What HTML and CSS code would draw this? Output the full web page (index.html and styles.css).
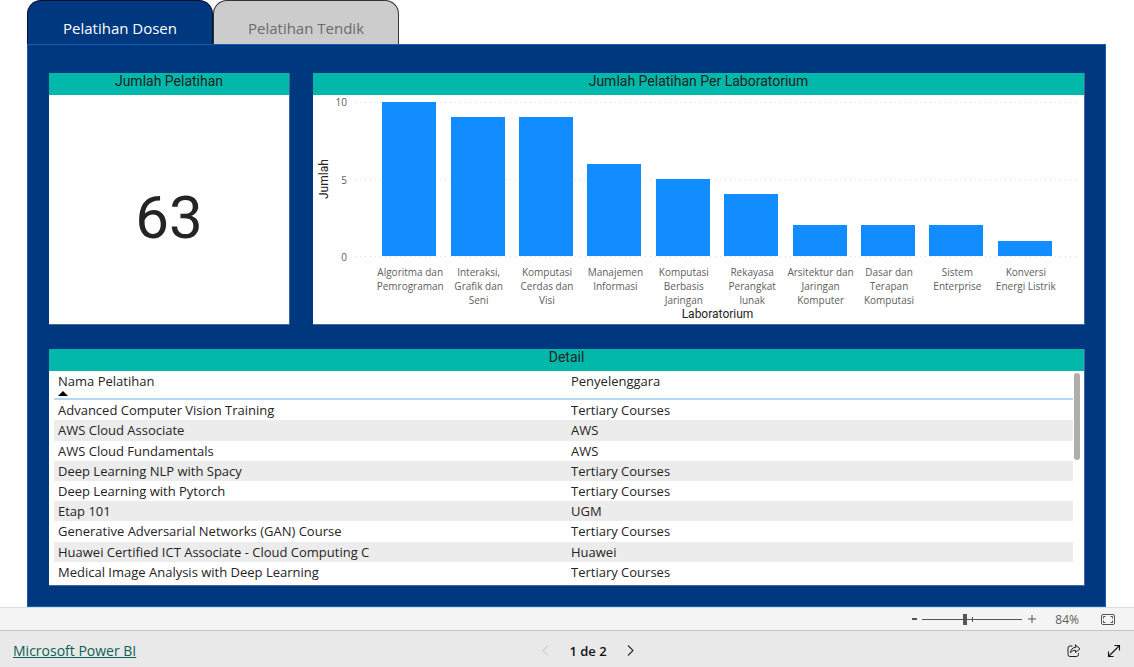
FILE: index.html
```html
<!DOCTYPE html>
<html lang="id">
<head>
<meta charset="utf-8">
<meta name="viewport" content="width=device-width, initial-scale=1">
<title>Pelatihan Dosen</title>
<link rel="stylesheet" href="styles.css">
</head>
<body>
<main class="report">
  <div class="tabs" role="tablist">
    <button class="tab tab-active" type="button" role="tab" aria-selected="true">Pelatihan Dosen</button>
    <button class="tab" type="button" role="tab" aria-selected="false">Pelatihan Tendik</button>
  </div>
  <div class="canvas">
    <section class="card total">
      <h2 class="card-title">Jumlah Pelatihan</h2>
      <p class="total-value">63</p>
    </section>

    <section class="card">
      <h2 class="card-title">Jumlah Pelatihan Per Laboratorium</h2>
      <div class="chart">
        <div class="axis-name-y">Jumlah</div>
        <div class="axis-y"><span>10</span><span>5</span><span>0</span></div>
        <div class="plot">
          <div class="gridlines"><i></i><i></i><i></i></div>
          <div class="bars">
            <div class="bar" style="height:100%"></div>
            <div class="bar" style="height:90%"></div>
            <div class="bar" style="height:90%"></div>
            <div class="bar" style="height:60%"></div>
            <div class="bar" style="height:50%"></div>
            <div class="bar" style="height:40%"></div>
            <div class="bar" style="height:20%"></div>
            <div class="bar" style="height:20%"></div>
            <div class="bar" style="height:20%"></div>
            <div class="bar" style="height:10%"></div>
          </div>
        </div>
        <div class="axis-x">
          <span>Algoritma dan<br>Pemrograman</span>
          <span>Interaksi,<br>Grafik dan<br>Seni</span>
          <span>Komputasi<br>Cerdas dan<br>Visi</span>
          <span>Manajemen<br>Informasi</span>
          <span>Komputasi<br>Berbasis<br>Jaringan</span>
          <span>Rekayasa<br>Perangkat<br>lunak</span>
          <span>Arsitektur dan<br>Jaringan<br>Komputer</span>
          <span>Dasar dan<br>Terapan<br>Komputasi</span>
          <span>Sistem<br>Enterprise</span>
          <span>Konversi<br>Energi Listrik</span>
        </div>
        <div class="axis-name-x">Laboratorium</div>
      </div>
    </section>

    <section class="card detail">
      <h2 class="card-title">Detail</h2>
      <div class="detail-body">
        <table class="table">
          <thead>
            <tr>
              <th aria-sort="ascending">Nama Pelatihan<svg class="sort" viewBox="0 0 10 5" aria-hidden="true"><path d="M0 5 5 0l5 5z"/></svg></th>
              <th>Penyelenggara</th>
            </tr>
          </thead>
          <tbody>
            <tr><td>Advanced Computer Vision Training</td><td>Tertiary Courses</td></tr>
            <tr><td>AWS Cloud Associate</td><td>AWS</td></tr>
            <tr><td>AWS Cloud Fundamentals</td><td>AWS</td></tr>
            <tr><td>Deep Learning NLP with Spacy</td><td>Tertiary Courses</td></tr>
            <tr><td>Deep Learning with Pytorch</td><td>Tertiary Courses</td></tr>
            <tr><td>Etap 101</td><td>UGM</td></tr>
            <tr><td>Generative Adversarial Networks (GAN) Course</td><td>Tertiary Courses</td></tr>
            <tr><td>Huawei Certified ICT Associate - Cloud Computing C</td><td>Huawei</td></tr>
            <tr><td>Medical Image Analysis with Deep Learning</td><td>Tertiary Courses</td></tr>
          </tbody>
        </table>
        <div class="scrollbar"><div class="scroll-thumb"></div></div>
      </div>
    </section>
  </div>
</main>

<div class="zoombar">
  <button class="icon-btn zoom-out" type="button" aria-label="Zoom out">
    <svg width="5" height="2" viewBox="0 0 5 2"><path d="M0 0h5v2H0z" fill="#555"/></svg>
  </button>
  <input class="zoom-range" type="range" min="0" max="100" value="42" aria-label="Zoom">
  <button class="icon-btn zoom-in" type="button" aria-label="Zoom in">
    <svg width="8" height="8" viewBox="0 0 8 8"><path d="M0 4h8M4 0v8" stroke="#555" fill="none"/></svg>
  </button>
  <span class="zoom-value">84%</span>
  <button class="icon-btn" type="button" aria-label="Fit to page">
    <svg width="14" height="11" viewBox="0 0 14 11" fill="none" stroke="#555"><rect x=".5" y=".5" width="13" height="10" rx="1.5"/><path d="M2.500 4.500v-2h2M2.500 6.500v2h2M11.500 4.500v-2h-2M11.500 6.500v2h-2"/></svg>
  </button>
</div>

<footer class="footer">
  <a class="brand" href="#">Microsoft Power BI</a>
  <nav class="pager" aria-label="Pages">
    <button class="icon-btn" type="button" disabled aria-label="Previous page">
      <svg width="7" height="11" viewBox="0 0 7 11" fill="none" stroke="#bdbdbd"><path d="M6 .5 1 5.500l5 5"/></svg>
    </button>
    <span>1 de 2</span>
    <button class="icon-btn" type="button" aria-label="Next page">
      <svg width="7" height="11" viewBox="0 0 7 11" fill="none" stroke="#333" stroke-width="1.200"><path d="M1 .5l5 5-5 5"/></svg>
    </button>
  </nav>
  <div class="actions">
    <button class="icon-btn" type="button" aria-label="Share">
      <svg width="14" height="14" viewBox="0 0 14 14" fill="none" stroke="#222" stroke-linejoin="round" stroke-linecap="round"><path d="M5 2H3a2 2 0 0 0-2 2v6.500a2 2 0 0 0 2 2h6.500a2 2 0 0 0 2-2V9.500"/><path d="M8.500 1 13 4.800 8.500 8.500V6.300C6.300 6.200 4.800 7 3.500 8.800c.2-3.300 2-5.300 5-5.500z"/></svg>
    </button>
    <button class="icon-btn" type="button" aria-label="Full screen">
      <svg width="14" height="14" viewBox="0 0 14 14" fill="none" stroke="#111" stroke-width="1.100"><path d="M1.500 12.500l11-11M7.500 1.500h5v5M1.500 7.500v5h5"/></svg>
    </button>
  </div>
</footer>
</body>
</html>
```
FILE: styles.css
```css
* {
  box-sizing: border-box;
}

body {
  margin: 0;
  min-height: 100vh;
  display: flex;
  flex-direction: column;
  background: #fff;
  color: #252423;
  font-family: "Open Sans", "Noto Sans", sans-serif;
  font-size: 13px;
}

button {
  font-family: inherit;
}

.report {
  padding: 0 28px 0 27px;
}

/* Page tabs */
.tabs {
  display: flex;
}

.tab {
  width: 186px;
  height: 44px;
  padding: 10px 0 0;
  border: 1px solid #333;
  border-bottom: 0;
  border-radius: 14px 14px 0 0;
  background: #ccc;
  color: #6b6b6b;
  font-size: 15px;
  line-height: 20px;
}

.tab-active {
  border-color: #001233;
  background: #003880;
  color: #fff;
}

/* Dashboard canvas */
.canvas {
  display: grid;
  grid-template-columns: 241fr 772fr;
  gap: 24px 23px;
  padding: 28px 20px 20px 21px;
  border: 1px solid #0d62b8;
  background: #003880;
}

.card {
  display: flex;
  flex-direction: column;
  background: #fff;
  border: 1px solid #41699f;
  border-width: 0 1px 1px 0;
}

.card-title {
  margin: 0;
  height: 22px;
  background: #01b8aa;
  font-family: Roboto, sans-serif;
  font-size: 14px;
  font-weight: 400;
  line-height: 17px;
  text-align: center;
}

.total-value {
  flex: 1;
  display: flex;
  align-items: center;
  justify-content: center;
  margin: 0;
  padding-top: 16px;
  font-family: Roboto, sans-serif;
  font-size: 60px;
  font-weight: 400;
}

/* Column chart */
.chart {
  display: grid;
  grid-template-columns: 20px 14px 1fr;
  grid-template-rows: 169px 43px 14px;
  padding: 0 4px 3px 0;
  font-size: 10px;
  line-height: 14px;
}

.axis-name-y,
.axis-name-x {
  font-family: Roboto, sans-serif;
  font-size: 12px;
  text-align: center;
}

.axis-name-y {
  writing-mode: vertical-rl;
  transform: rotate(180deg);
  line-height: 22px;
}

.axis-y {
  display: flex;
  flex-direction: column;
  justify-content: space-between;
  color: #605e5c;
  text-align: right;
}

.plot {
  display: grid;
  margin-left: 8px;
  padding: 7px 0;
}

.gridlines,
.bars {
  grid-area: 1 / 1;
}

.gridlines {
  display: flex;
  flex-direction: column;
  justify-content: space-between;
}

.gridlines i {
  height: 1px;
  background: repeating-linear-gradient(90deg, #dcdcdc 0 1px, transparent 1px 5px);
}

.bars,
.axis-x {
  display: grid;
  grid-template-columns: repeat(10, 1fr);
}

.bars {
  align-items: end;
  justify-items: center;
  padding: 0 21px 1px 20px;
}

.bar {
  width: 79%;
  background: #118dff;
}

.axis-x {
  grid-column: 3;
  padding: 1px 20px 0 29px;
  color: #605e5c;
  text-align: center;
  white-space: nowrap;
}

.axis-x span {
  display: flex;
  justify-content: center;
}

.axis-name-x {
  grid-column: 3;
  margin-left: 8px;
}

/* Detail table */
.detail {
  grid-column: 1 / -1;
}

.detail-body {
  display: flex;
  justify-content: space-between;
  height: 214px;
  padding: 0 4px 0 5px;
}

.table {
  flex: 1;
  height: 211px;
  border-collapse: collapse;
  table-layout: fixed;
}

.table th {
  height: 28px;
  padding: 2px 4px 0;
  border-bottom: 2px solid #b3d9f9;
  font-weight: 400;
  line-height: 16px;
  text-align: left;
  vertical-align: top;
}

.table th:first-child {
  width: 513px;
}

.table td {
  padding: 0 4px;
  line-height: 18px;
}

.table tbody tr:nth-child(even) {
  background: #ececec;
}

.sort {
  display: block;
  width: 10px;
  height: 5px;
  margin-top: 2px;
}

.scrollbar {
  width: 6px;
  margin-left: 1px;
  padding-top: 2px;
}

.scroll-thumb {
  height: 87px;
  border-radius: 3px;
  background: #b0aeac;
}

/* Zoom bar */
.zoombar {
  display: flex;
  align-items: center;
  justify-content: flex-end;
  height: 24px;
  padding-right: 19px;
  border: 1px solid #dcdcdc;
  border-width: 1px 0;
  border-bottom-color: #c6c6c6;
  background: #f4f4f4;
  color: #605e5c;
  font-size: 12px;
}

.icon-btn {
  display: flex;
  padding: 0;
  border: 0;
  background: none;
}

.zoom-range {
  appearance: none;
  width: 100px;
  height: 12px;
  margin: 0 6px 0 5px;
  background:
    linear-gradient(#555, #555) 50px 4px / 1px 5px no-repeat,
    linear-gradient(#555, #555) 0 6px / 100% 1px no-repeat;
}

.zoom-range::-webkit-slider-thumb {
  appearance: none;
  width: 4px;
  height: 11px;
  background: #555;
}

.zoom-value {
  margin: 0 22px 0 19px;
}

/* Footer */
.footer {
  flex: 1;
  display: grid;
  grid-template-columns: 1fr auto 1fr;
  align-items: center;
  min-height: 36px;
  padding: 3px 13px 0;
  background: #e9e9e9;
}

.brand {
  color: #0b5f55;
  font-size: 14px;
}

.pager {
  display: flex;
  align-items: center;
  gap: 20px;
  margin-left: 42px;
  color: #111;
  font-weight: 600;
}

.actions {
  display: flex;
  justify-content: flex-end;
  gap: 26px;
}
```
